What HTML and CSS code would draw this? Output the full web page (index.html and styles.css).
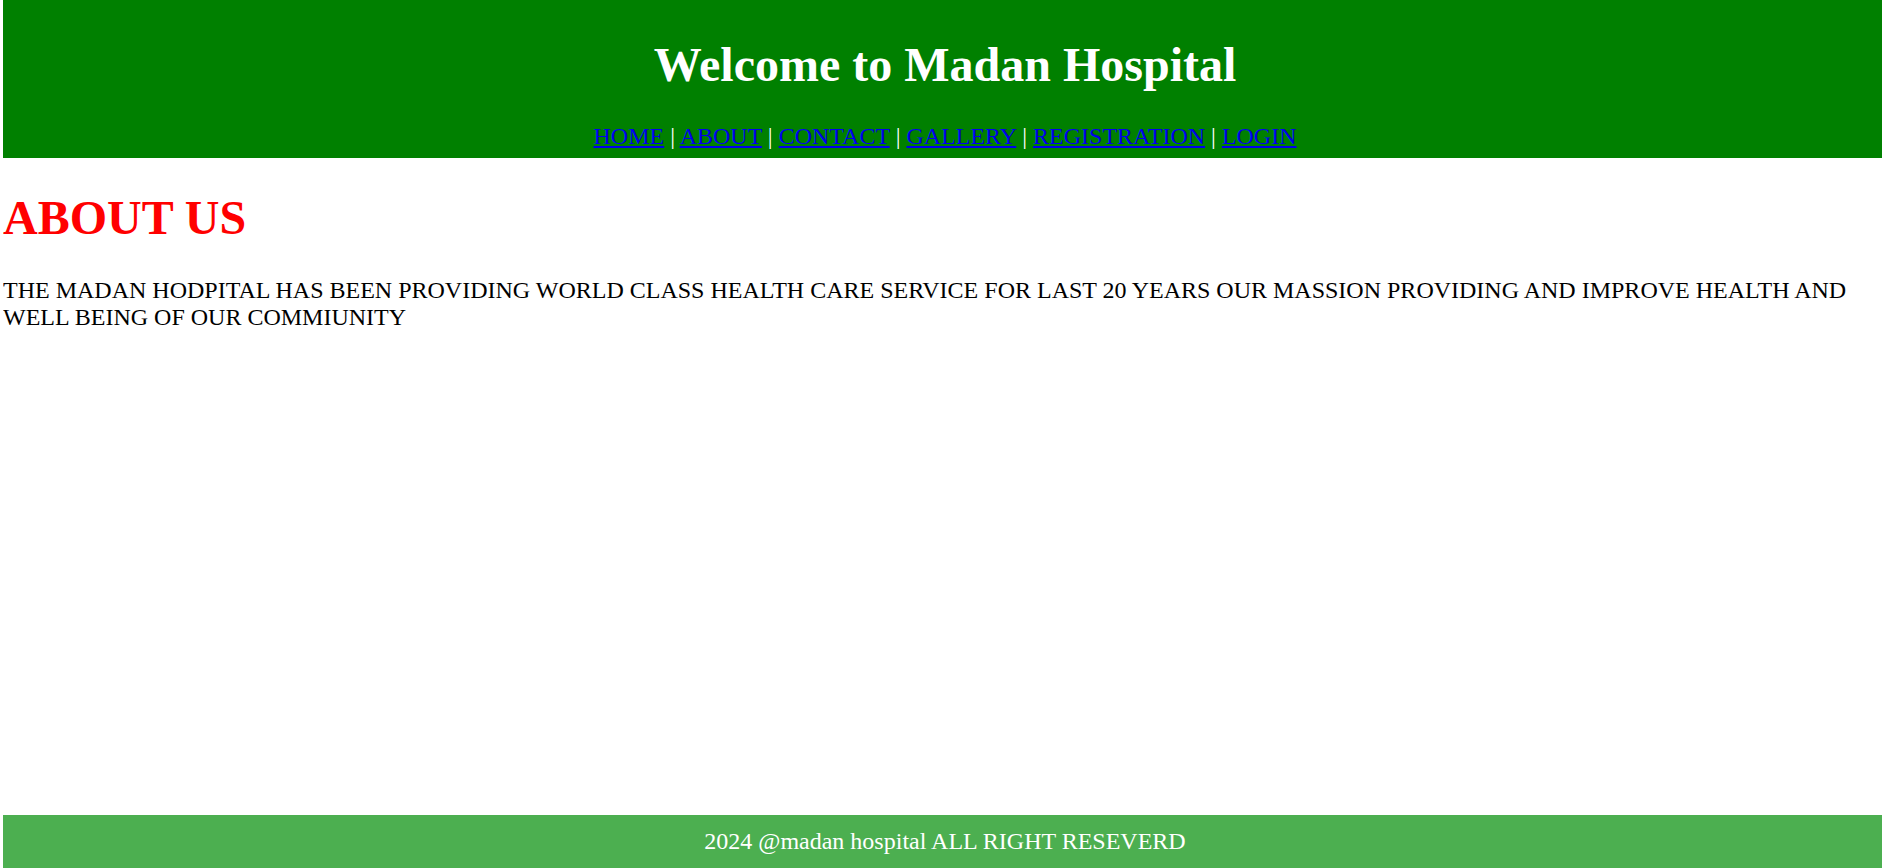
FILE: index.html
```html
<!DOCTYPE html>
<html lang="en">
<head>
<meta charset="utf-8">
<title>Madan Hospital - About</title>
<link rel="stylesheet" href="styles.css">
</head>
<body>
<header class="site-header">
  <h1 class="site-title">Welcome to Madan Hospital</h1>
  <nav class="site-nav">
    <a href="#">HOME</a> | <a href="#">ABOUT</a> | <a href="#">CONTACT</a> | <a href="#">GALLERY</a> | <a href="#">REGISTRATION</a> | <a href="#">LOGIN</a>
  </nav>
</header>
<main class="content">
  <h2 class="section-title">ABOUT US</h2>
  <p class="section-text">THE MADAN HODPITAL HAS BEEN PROVIDING WORLD CLASS HEALTH CARE SERVICE FOR LAST 20 YEARS OUR MASSION PROVIDING AND IMPROVE HEALTH AND WELL BEING OF OUR COMMIUNITY</p>
</main>
<footer class="site-footer">2024 @madan hospital ALL RIGHT RESEVERD</footer>
</body>
</html>
```

FILE: styles.css
```css
html, body {
  height: 100%;
}
body {
  margin: 0 0 0 3px;
  font-family: "Liberation Serif", "Times New Roman", serif;
  display: flex;
  flex-direction: column;
  min-height: 100vh;
  background: #ffffff;
}
.site-header {
  background: #008000;
  color: #ffffff;
  text-align: center;
  padding: 37px 0 8px 5px;
}
.site-title {
  margin: 0;
  font-size: 48px;
  font-weight: bold;
}
.site-nav {
  margin-top: 31px;
  font-size: 24px;
}
.site-nav a {
  color: #0000ee;
}
.content {
  flex: 1;
}
.section-title {
  color: #ff0000;
  font-size: 48px;
  font-weight: bold;
  margin: 32px 0 32px;
}
.section-text {
  font-size: 24px;
  margin: 0;
  color: #000000;
}
.site-footer {
  background: #4caf50;
  color: #ffffff;
  text-align: center;
  font-size: 24px;
  padding: 13px 0 13px 5px;
}
```
